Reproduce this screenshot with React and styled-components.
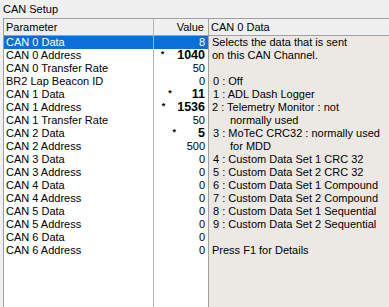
import React from "react";
import styled, { createGlobalStyle } from "styled-components";

const Global = createGlobalStyle`
  html, body { margin: 0; padding: 0; background: #f0f0f0; }
  body { font-family: "Liberation Sans", Arial, sans-serif; font-size: 11px; color: #000; }
`;

const Page = styled.div`
  width: 389px;
  height: 307px;
  display: flex;
  flex-direction: column;
  overflow: hidden;
  background: #f0f0f0;
`;

const Title = styled.div`
  height: 18px;
  line-height: 18px;
  padding-left: 3px;
  font-size: 11px;
`;

const Table = styled.div`
  flex: 1;
  display: flex;
  margin-left: 3px;
  border-top: 1px solid #a0a0a0;
  border-left: 1px solid #a0a0a0;
  min-height: 0;
`;

const Column = styled.div`
  display: flex;
  flex-direction: column;
  width: ${(p) => p.$w}px;
  background: #fff;
  border-right: 1px solid ${(p) => p.$line};
`;

const Header = styled.div`
  height: 16px;
  line-height: 16px;
  flex: none;
  background: #f0f0f0;
  border-bottom: 1px solid #a0a0a0;
  padding: ${(p) => (p.$right ? "0 4px 0 0" : "0 0 0 2px")};
  text-align: ${(p) => (p.$right ? "right" : "left")};
  white-space: nowrap;
`;

const Cell = styled.div`
  height: 13px;
  line-height: 13px;
  white-space: nowrap;
  display: flex;
  align-items: center;
  justify-content: ${(p) => (p.$right ? "flex-end" : "flex-start")};
  padding: ${(p) => (p.$right ? "0 3px 0 0" : "0 0 0 2px")};
  background: ${(p) => (p.$sel ? "#0a6fd6" : "transparent")};
  color: ${(p) => (p.$sel ? "#fff" : "#000")};
`;

const Star = styled.span`
  font-size: 9px;
  font-weight: bold;
  align-self: flex-start;
  line-height: 11px;
  margin-right: ${(p) => p.$gap}px;
`;

const Num = styled.span`
  font-weight: ${(p) => (p.$bold ? "bold" : "normal")};
  font-size: ${(p) => (p.$bold ? "12.5px" : "11px")};
`;

const Panel = styled.div`
  flex: 1;
  display: flex;
  flex-direction: column;
  background: #ece9e5;
`;

const PanelBody = styled.div`
  padding-left: 3px;
`;

const Line = styled.div`
  height: 13px;
  line-height: 13px;
  white-space: pre;
  padding-left: ${(p) => p.$indent}px;
`;

const rows = [
  ["CAN 0 Data", "8", false, 0],
  ["CAN 0 Address", "1040", true, 13],
  ["CAN 0 Transfer Rate", "50"],
  ["BR2 Lap Beacon ID", "0"],
  ["CAN 1 Data", "11", true, 20],
  ["CAN 1 Address", "1536", true, 12],
  ["CAN 1 Transfer Rate", "50"],
  ["CAN 2 Data", "5", true, 22],
  ["CAN 2 Address", "500"],
  ["CAN 3 Data", "0"],
  ["CAN 3 Address", "0"],
  ["CAN 4 Data", "0"],
  ["CAN 4 Address", "0"],
  ["CAN 5 Data", "0"],
  ["CAN 5 Address", "0"],
  ["CAN 6 Data", "0"],
  ["CAN 6 Address", "0"],
];

const desc = [
  ["Selects the data that is sent", 0],
  ["on this CAN Channel.", 0],
  ["", 0],
  ["0 : Off", 1],
  ["1 : ADL Dash Logger", 1],
  ["2 : Telemetry Monitor : not", 0],
  ["normally used", 18],
  ["3 : MoTeC CRC32 : normally used", 1],
  ["for MDD", 18],
  ["4 : Custom Data Set 1 CRC 32", 1],
  ["5 : Custom Data Set 2 CRC 32", 1],
  ["6 : Custom Data Set 1 Compound", 1],
  ["7 : Custom Data Set 2 Compound", 1],
  ["8 : Custom Data Set 1 Sequential", 1],
  ["9 : Custom Data Set 2 Sequential", 1],
  ["", 0],
  ["Press F1 for Details", 0],
];

export default function App() {
  return (
    <Page>
      <Global />
      <Title>CAN Setup</Title>
      <Table>
        <Column $w={149} $line="#b4b4b4">
          <Header>Parameter</Header>
          {rows.map((r, i) => (
            <Cell key={i} $sel={i === 0}>
              {r[0]}
            </Cell>
          ))}
        </Column>
        <Column $w={54} $line="#a0a0a0">
          <Header $right>Value</Header>
          {rows.map((r, i) => (
            <Cell key={i} $right $sel={i === 0}>
              {r[2] && <Star $gap={r[3]}>*</Star>}
              <Num $bold={r[2]}>{r[1]}</Num>
            </Cell>
          ))}
        </Column>
        <Panel>
          <Header>CAN 0 Data</Header>
          <PanelBody>
            {desc.map((d, i) => (
              <Line key={i} $indent={d[1]}>
                {d[0]}
              </Line>
            ))}
          </PanelBody>
        </Panel>
      </Table>
    </Page>
  );
}
